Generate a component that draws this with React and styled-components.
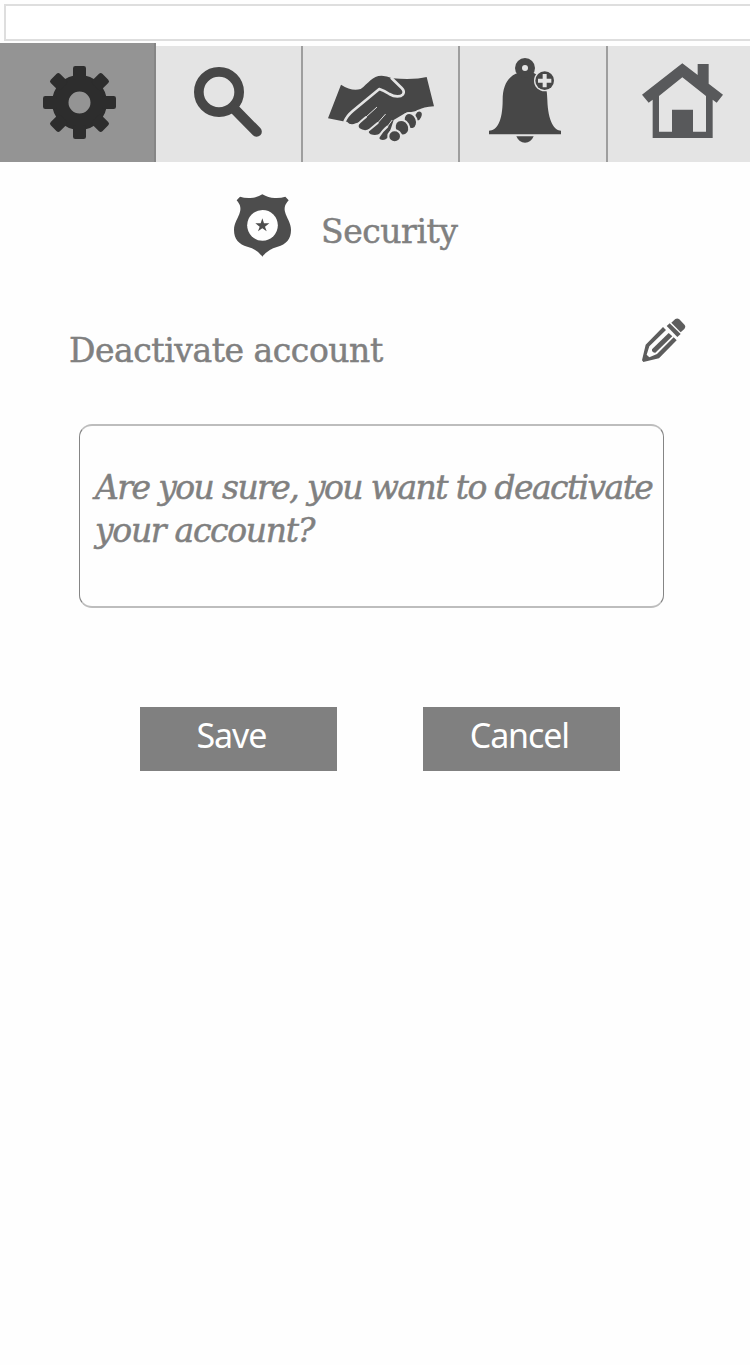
import React from 'react';
import styled, { createGlobalStyle } from 'styled-components';

const GlobalStyle = createGlobalStyle`
  * { box-sizing: border-box; }
  body { margin: 0; background: #fefefe; }
`;

const Screen = styled.div`
  display: flow-root;
  width: 750px;
  height: 1365px;
  overflow: hidden;
  background: #fefefe;
  color: #808080;
  font-family: 'DejaVu Serif', serif;
`;

const AddressBar = styled.div`
  height: 37px;
  margin: 4px 0 2px 4px;
  border: 2px solid #dedede;
  border-right: 0;
  background: #fff;
`;

const TabBar = styled.nav`
  display: flex;
  align-items: flex-start;
  height: 121px;
`;

const Tab = styled.button`
  flex: none;
  width: ${(p) => p.$width}px;
  height: ${(p) => (p.$active ? 119 : 116)}px;
  margin: ${(p) => (p.$active ? 0 : 3)}px 0 0;
  padding: ${(p) => p.$pad};
  border: 0;
  border-right: ${(p) => (p.$last ? '0' : `2px solid ${p.$active ? '#868686' : '#9e9e9e'}`)};
  background: ${(p) => (p.$active ? '#949494' : '#e4e4e4')};
  display: flex;
  align-items: flex-start;
  justify-content: flex-start;
`;

const Icon = styled.svg`
  display: block;
  flex: none;
  width: ${(p) => p.$w}px;
  height: ${(p) => p.$h}px;
`;

const PageHeader = styled.header`
  display: flex;
  align-items: flex-start;
  padding: 30px 0 0 234px;
  height: 110px;
`;

const Title = styled.h1`
  margin: 16px 0 0 30px;
  font-size: 33px;
  line-height: 44px;
  font-weight: 400;
  letter-spacing: -0.45px;
  -webkit-text-stroke: 0.5px currentColor;
`;

const SettingRow = styled.section`
  display: flex;
  justify-content: space-between;
  align-items: flex-start;
  padding: 44px 64px 0 69px;
  height: 150px;
`;

const SettingName = styled.h2`
  margin: 11px 0 0;
  font-size: 33px;
  line-height: 44px;
  font-weight: 400;
  letter-spacing: -0.45px;
  -webkit-text-stroke: 0.5px currentColor;
`;

const Prompt = styled.p`
  width: 585px;
  height: 184px;
  margin: 0 0 0 79px;
  padding: 40px 0 0 15px;
  border: solid;
  border-width: 2px 1px;
  border-color: #bdbdbd #858585;
  border-radius: 13px;
  font-size: 33px;
  line-height: 43px;
  font-style: italic;
  letter-spacing: -1.6px;
  white-space: nowrap;
  -webkit-text-stroke: 0.5px currentColor;
`;

const PromptLine = styled.span`
  display: block;
  letter-spacing: ${(p) => p.$spacing}px;
`;

const Actions = styled.div`
  display: flex;
  gap: 85.4px;
  padding: 99px 0 0 139.6px;
`;

const Action = styled.button`
  width: 197.6px;
  height: 64px;
  padding: 0 ${(p) => p.$shift}px 9px 0;
  border: 0;
  background: #808080;
  color: #fff;
  font-family: 'Noto Sans', sans-serif;
  font-size: 34px;
  line-height: 44px;
  letter-spacing: -1.1px;
`;

const GearIcon = () => (
  <Icon $w={73} $h={73} viewBox="129 198 219 219" fill="#2d2d2d">
    <path fillRule="evenodd" d="M156 307.5a82.5 82.5 0 1 0 165 0a82.5 82.5 0 1 0-165 0ZM205.5 307.5a33 33 0 1 1 66 0a33 33 0 1 1-66 0Z" />
    {[0, 45, 90, 135, 180, 225, 270, 315].map((a) => (
      <rect key={a} x="219" y="198" width="39" height="42" rx="7" transform={`rotate(${a} 238.5 307.5)`} />
    ))}
  </Icon>
);

const SearchIcon = () => (
  <Icon $w={69} $h={72} viewBox="132 78 207 216" fill="none" stroke="#474747">
    <circle cx="207" cy="156" r="60.5" strokeWidth="29" />
    <path d="M255 209L320 275" strokeWidth="31" strokeLinecap="round" />
  </Icon>
);

const HandshakeIcon = () => (
  <Icon $w={107} $h={67} viewBox="39 45 321 201" fill="#474747">
    <path d="M39 175L78 74Q110 95 137 87C160 70 172 47 200 47Q215 48 232 55Q300 60 335 51L357 139Q325 140 308 152L270 160L236 180L228 205L217 234Q207 244 195 238Q189 230 197 219Q185 229 167 223Q158 218 163 208Q146 214 134 205Q127 198 136 186L122 190Q106 197 96 185L84 184Z" />
    <g fill="none" stroke="#e4e4e4" strokeLinecap="round">
      <path d="M89 184Q95 168 114 152L193 87Q208 92 223 102C240 112 257 111 264 103Q270 94 260 84L230 55" strokeWidth="8" strokeLinejoin="round" />
      <path d="M126 196Q132 188 153 171" strokeWidth="6" />
      <path d="M153 171L185 142" strokeWidth="3" />
      <path d="M158 214L188 189" strokeWidth="6" />
      <path d="M188 189L211 163" strokeWidth="3" />
      <path d="M191 231Q204 210 217 200" strokeWidth="6" />
      <path d="M217 200L231 181" strokeWidth="3" />
    </g>
    <g stroke="#e4e4e4" strokeWidth="6">
      <ellipse cx="310" cy="168" rx="12" ry="17" transform="rotate(24 310 168)" />
      <ellipse cx="286" cy="183" rx="19" ry="25" transform="rotate(-22 286 183)" />
      <ellipse cx="261" cy="203" rx="21" ry="24" transform="rotate(-30 261 203)" />
      <ellipse cx="239" cy="229" rx="19" ry="18" />
    </g>
  </Icon>
);

const BellIcon = () => (
  <Icon $w={72} $h={85} viewBox="117 54 216 255" fill="#474747">
    <path d="M117 272C140 272 158 245 158 180C158 128 181 105 206 98H250C278 112 292 130 292 180C294 245 314 272 333 272V283H117Z" />
    <circle cx="225" cy="84" r="30" />
    <circle cx="225" cy="84" r="9" fill="#e4e4e4" />
    <path d="M199 289H251Q243 308 225 308Q207 308 199 289Z" />
    <circle cx="284" cy="122" r="32" fill="#e4e4e4" />
    <circle cx="284" cy="122" r="28" />
    <path d="M284 102V142M264 122H304" stroke="#e4e4e4" strokeWidth="12" />
  </Icon>
);

const HomeIcon = () => (
  <Icon $w={81} $h={75} viewBox="126 69 243 225" fill="#58595b">
    <path fillRule="evenodd" d="M247 70L293 105V72H326V131L369 164L350 188L338 179V294H158V179L146 188L126 164ZM177 275V168L247 112L318 168V275H279V209H216V275Z" />
  </Icon>
);

const BadgeIcon = () => (
  <Icon $w={57} $h={63} viewBox="42 27 171 189" fill="#4d4d4d">
    <path d="M127 28Q145 39 164 39Q182 40 196 35L206 46Q190 63 195 80C200 100 213 112 213 135C213 163 198 178 173 185Q143 193 127 215Q112 193 82 185C57 178 42 163 42 135C42 112 55 100 60 80Q65 63 50 46L60 35Q74 40 91 39Q110 39 127 28Z" />
    <circle cx="127.5" cy="121" r="46" fill="#fefefe" />
    <path d="M127 100L132 115H148L135 125L140 139L127 130L114 139L119 125L106 115H122Z" />
  </Icon>
);

const PencilIcon = () => (
  <Icon $w={44} $h={44} viewBox="36 24 132 132" fill="#5d5d5d">
    <path d="M124 38L136 27Q142 23 148 28L164 45Q168 51 163 57L152 67Z" />
    <path d="M110 48L119 40L152 72L142 81Z" />
    <path fillRule="evenodd" d="M99 51L108 60L58 109L50 134L58 142L81 132L131 82L140 91L87 145L40 156L36 151L47 104Z" />
    <path d="M66 118L116 69L127 79L76 128Q70 129 66 123Z" />
  </Icon>
);

export default function App() {
  return (
    <>
      <GlobalStyle />
      <Screen>
        <AddressBar />
        <TabBar>
          <Tab $active $width={156} $pad="23px 0 0 43px" aria-label="Settings"><GearIcon /></Tab>
          <Tab $width={147} $pad="20px 0 0 38px" aria-label="Search"><SearchIcon /></Tab>
          <Tab $width={157} $pad="29px 0 0 25px" aria-label="Connections"><HandshakeIcon /></Tab>
          <Tab $width={147.5} $pad="12px 0 0 29px" aria-label="Notifications"><BellIcon /></Tab>
          <Tab $last $width={142.5} $pad="17px 0 0 34.5px" aria-label="Home"><HomeIcon /></Tab>
        </TabBar>
        <PageHeader>
          <BadgeIcon />
          <Title>Security</Title>
        </PageHeader>
        <SettingRow>
          <SettingName>Deactivate account</SettingName>
          <PencilIcon />
        </SettingRow>
        <Prompt>
          <PromptLine $spacing={-1.6}>Are you sure, you want to deactivate</PromptLine>
          <PromptLine $spacing={-1.3}>your account?</PromptLine>
        </Prompt>
        <Actions>
          <Action $shift={14}>Save</Action>
          <Action $shift={4}>Cancel</Action>
        </Actions>
      </Screen>
    </>
  );
}
